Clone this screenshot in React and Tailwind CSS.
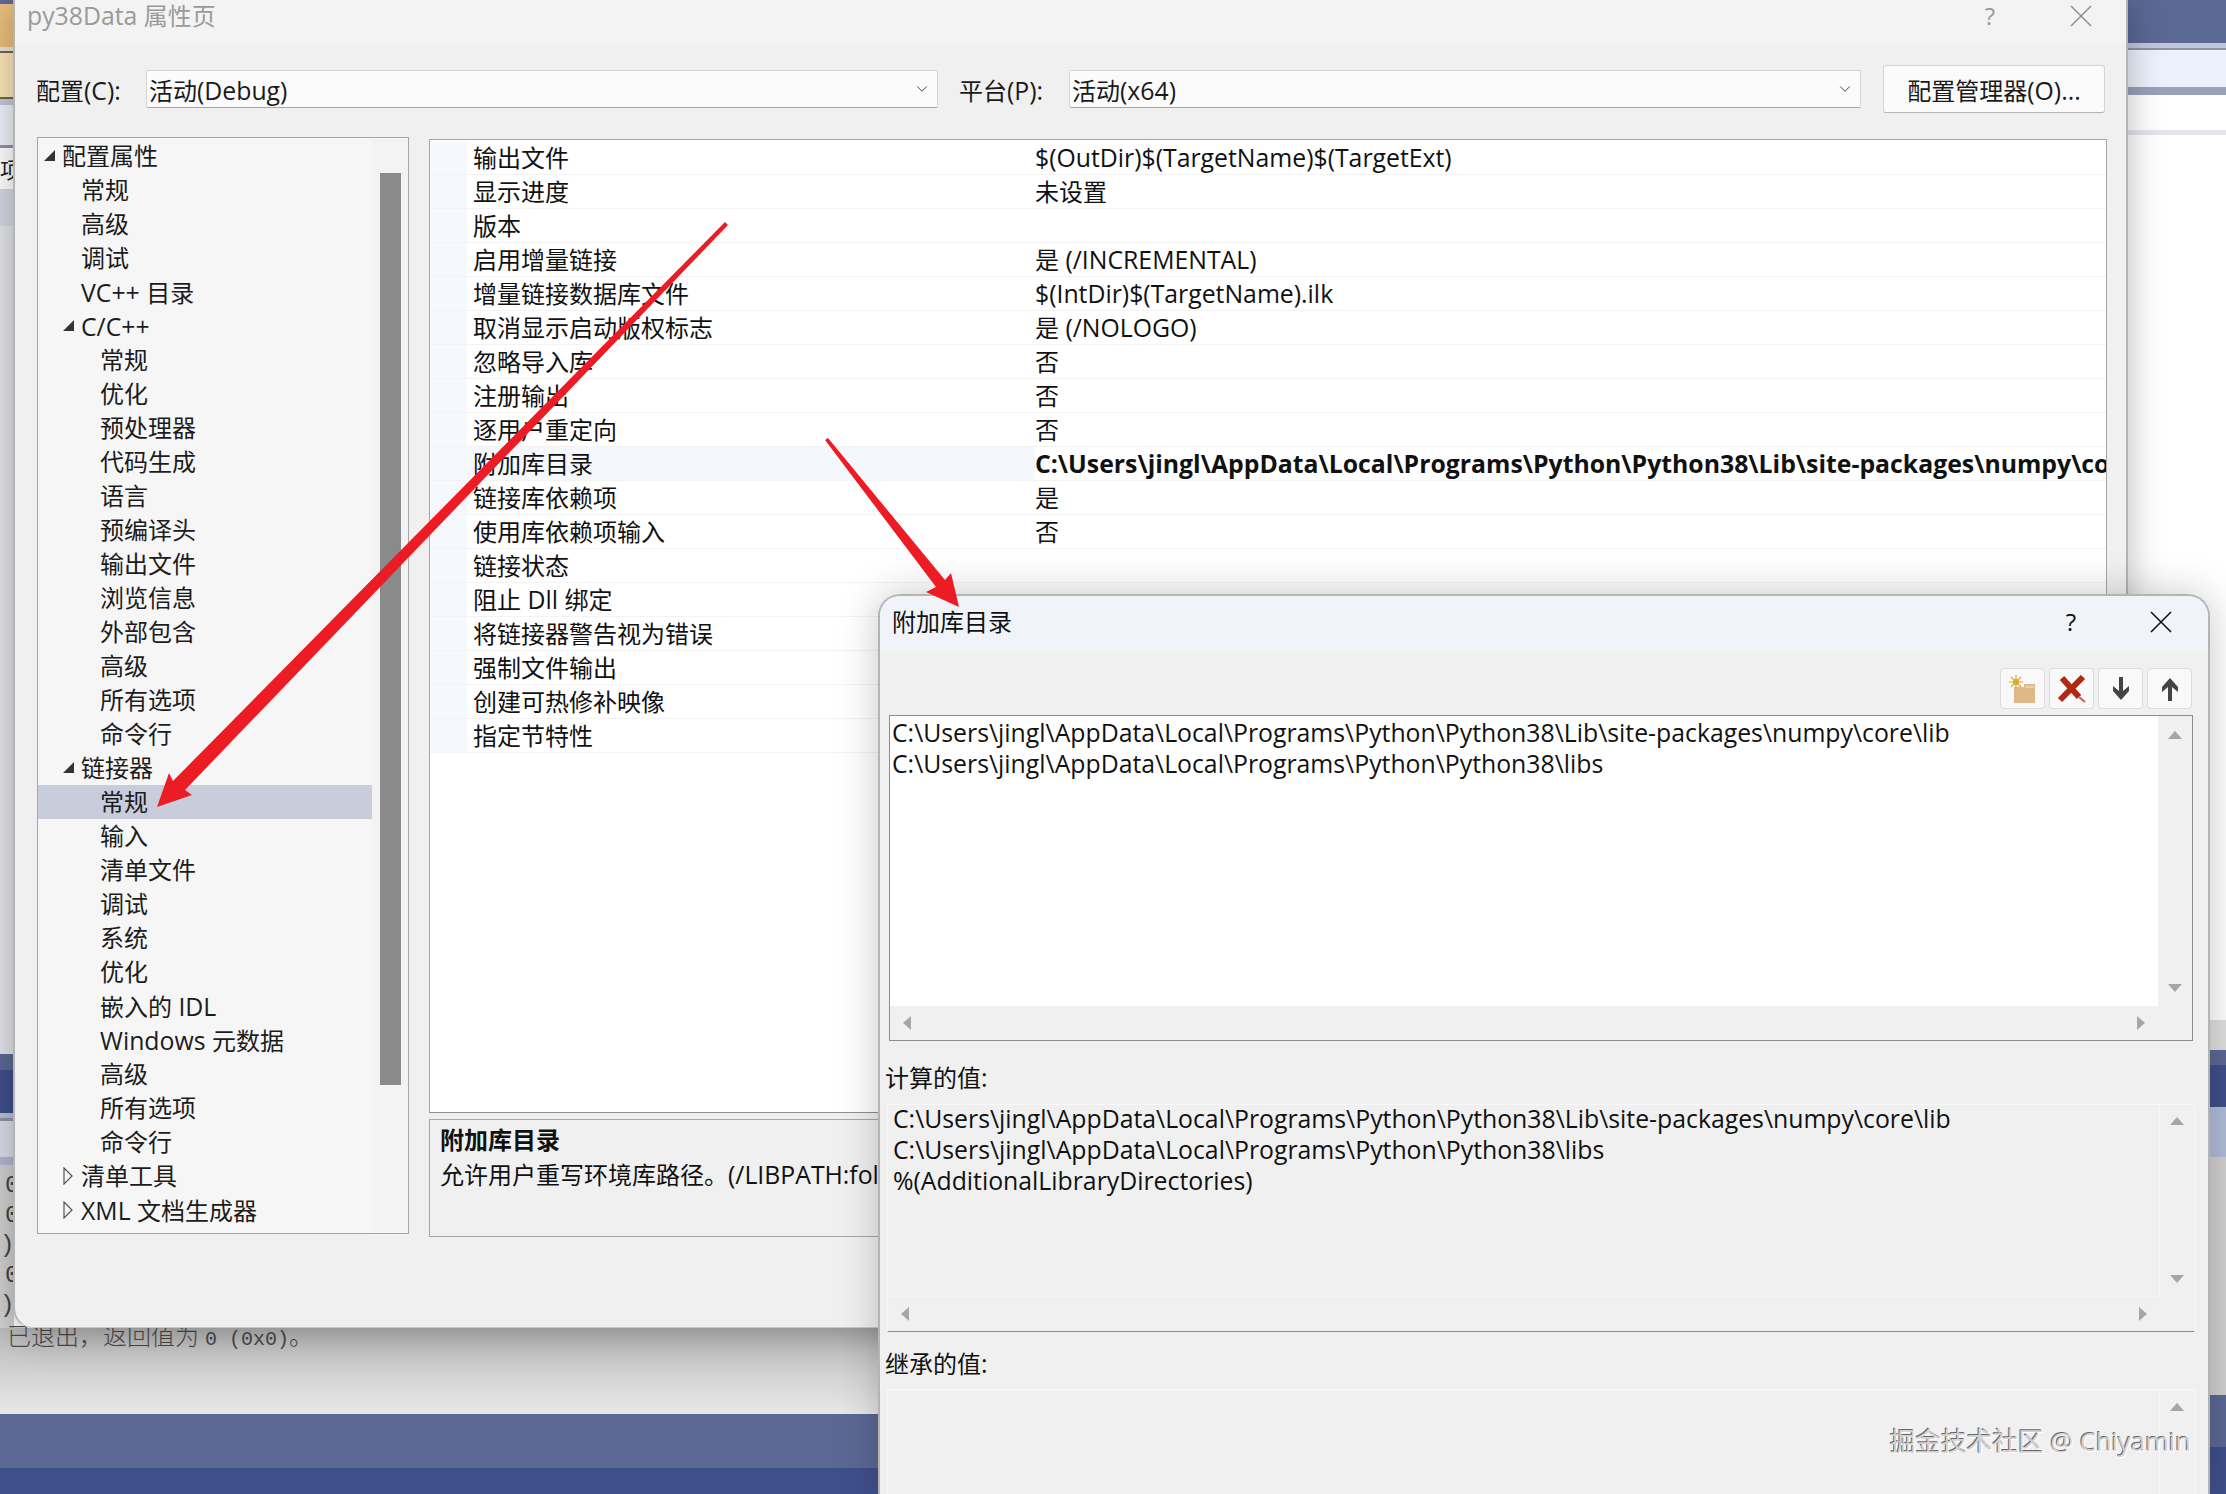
import { ChevronDown } from "lucide-react";

const uiFont = "[font-family:'Open_Sans','Noto_Sans_CJK_SC',sans-serif]";

// latin runs come out a bit narrow at the CJK size, so they get their own size
const Txt = ({ children }) =>
  children.split(/([\x00-\u024f]+)/).map((part, i) =>
    i % 2 ? (
      <span key={i} className="text-[24.8px]">
        {part}
      </span>
    ) : (
      part
    )
  );

const treeRows = [
  { label: "配置属性", level: 0, arrow: "open" },
  { label: "常规", level: 1 },
  { label: "高级", level: 1 },
  { label: "调试", level: 1 },
  { label: "VC++ 目录", level: 1 },
  { label: "C/C++", level: 1, arrow: "open" },
  { label: "常规", level: 2 },
  { label: "优化", level: 2 },
  { label: "预处理器", level: 2 },
  { label: "代码生成", level: 2 },
  { label: "语言", level: 2 },
  { label: "预编译头", level: 2 },
  { label: "输出文件", level: 2 },
  { label: "浏览信息", level: 2 },
  { label: "外部包含", level: 2 },
  { label: "高级", level: 2 },
  { label: "所有选项", level: 2 },
  { label: "命令行", level: 2 },
  { label: "链接器", level: 1, arrow: "open" },
  { label: "常规", level: 2, selected: true },
  { label: "输入", level: 2 },
  { label: "清单文件", level: 2 },
  { label: "调试", level: 2 },
  { label: "系统", level: 2 },
  { label: "优化", level: 2 },
  { label: "嵌入的 IDL", level: 2 },
  { label: "Windows 元数据", level: 2 },
  { label: "高级", level: 2 },
  { label: "所有选项", level: 2 },
  { label: "命令行", level: 2 },
  { label: "清单工具", level: 1, arrow: "closed" },
  { label: "XML 文档生成器", level: 1, arrow: "closed" },
];

const propRows = [
  ["输出文件", "$(OutDir)$(TargetName)$(TargetExt)"],
  ["显示进度", "未设置"],
  ["版本", ""],
  ["启用增量链接", "是 (/INCREMENTAL)"],
  ["增量链接数据库文件", "$(IntDir)$(TargetName).ilk"],
  ["取消显示启动版权标志", "是 (/NOLOGO)"],
  ["忽略导入库", "否"],
  ["注册输出", "否"],
  ["逐用户重定向", "否"],
  ["附加库目录", "C:\\Users\\jingl\\AppData\\Local\\Programs\\Python\\Python38\\Lib\\site-packages\\numpy\\core\\lib", true],
  ["链接库依赖项", "是"],
  ["使用库依赖项输入", "否"],
  ["链接状态", ""],
  ["阻止 Dll 绑定", ""],
  ["将链接器警告视为错误", ""],
  ["强制文件输出", ""],
  ["创建可热修补映像", ""],
  ["指定节特性", ""],
];

const levelPadding = ["pl-[24px]", "pl-[43px]", "pl-[62px]"];
const arrowLeft = ["left-[4px]", "left-[23px]"];

const TreeArrow = ({ type, level }) => (
  <svg width="14" height="18" viewBox="0 0 14 18" className={`absolute top-[8px] ${arrowLeft[level]}`}>
    {type === "open" ? (
      <polygon points="13,3 13,14 2,14" fill="#333" />
    ) : (
      <polygon points="3,1 11,9 3,17" fill="none" stroke="#555" strokeWidth="1.2" />
    )}
  </svg>
);

const Select = ({ value, width }) => (
  <div className={`${width} h-[38px] flex items-center justify-between pl-[2px] pr-[6px] bg-[#fbfbfb] border border-[#d4d4d4] border-b-[#a8a8a8] rounded-[2px]`}>
    <span className="text-[24px] text-[#1a1a1a] pt-[4px]">
      <Txt>{value}</Txt>
    </span>
    <ChevronDown size={18} strokeWidth={1.3} className="text-[#444]" />
  </div>
);

const ScrollArrow = ({ dir }) => {
  const pts = {
    up: "1,11 8,3 15,11",
    down: "1,4 15,4 8,12",
    left: "11,1 11,15 3,8",
    right: "4,1 12,8 4,15",
  };
  return (
    <svg width="16" height="16" viewBox="0 0 16 16" className="shrink-0">
      <polygon points={pts[dir]} fill="#a6a6a6" />
    </svg>
  );
};

const PathBox = ({ lines, height, outerClass, innerClass, pad, arrowPad, hideBar }) => (
  <div className={`${height} ${outerClass} flex flex-col`}>
    <div className="flex-1 flex min-h-0">
      <div className={`flex-1 ${innerClass} ${pad} text-[24px] leading-[31px] text-[#111] whitespace-nowrap overflow-hidden`}>
        <div className="-mt-[2px]">
          {lines.map((line) => (
            <div key={line}>
              <Txt>{line}</Txt>
            </div>
          ))}
        </div>
      </div>
      <div className={`w-[34px] flex flex-col items-center justify-between ${arrowPad}`}>
        <ScrollArrow dir="up" />
        <ScrollArrow dir="down" />
      </div>
    </div>
    {!hideBar && (
      <div className="h-[34px] shrink-0 flex items-center justify-between pl-[10px] pr-[43px]">
        <ScrollArrow dir="left" />
        <ScrollArrow dir="right" />
      </div>
    )}
  </div>
);

const ToolButton = ({ children }) => (
  <div className="w-[45px] h-[41px] flex items-center justify-center bg-[#f9f9f9] border border-[#dcdcdc] rounded-[4px]">
    {children}
  </div>
);

const Band = ({ className }) => <div className={`shrink-0 ${className}`} />;

const Backdrop = () => (
  <div className="flex h-full">
    {/* left sliver of the IDE */}
    <div className="w-[14px] flex flex-col font-['Noto_Sans_CJK_SC']">
      <Band className="h-[4px] bg-[#5c6894]" />
      <Band className="h-[43px] bg-[#e8bf7c]" />
      <Band className="h-[4px] bg-[#e9e4da]" />
      <Band className="h-[48px] bg-[#fbe5b8] border-y-2 border-[#75643f]" />
      <Band className="h-[6px] bg-[#c2c8d8]" />
      <Band className="h-[40px] bg-[#eef2fa]" />
      <Band className="h-[3px] bg-[#8f93a5]" />
      <div className="h-[41px] shrink-0 bg-white text-[22px] leading-[41px] text-[#222] overflow-hidden">项</div>
      <Band className="h-[37px] bg-[#d6d8e2]" />
      <Band className="h-[828px] bg-[#e4e5ea]" />
      <Band className="h-[16px] bg-[#5c6894]" />
      <Band className="h-[43px] bg-[#3f4f8a]" />
      <Band className="h-[5px] bg-[#b8c0d8]" />
      <Band className="h-[3px] bg-[#8f93a5]" />
      <Band className="h-[36px] bg-[#dadde8]" />
      <Band className="h-[8px] bg-[#b5b5d5]" />
      <div className="h-[163px] shrink-0 bg-[#cfcfcf] text-[24px] leading-[30px] text-[#444] font-['Liberation_Mono'] pt-[6px] overflow-hidden">
        <div className="pl-[5px]">0</div>
        <div className="pl-[5px]">0</div>
        <div>)</div>
        <div className="pl-[5px]">0</div>
        <div>)</div>
      </div>
      <Band className="h-[86px] bg-gradient-to-b from-[#b9b9b9] to-[#e8e8ea]" />
      <Band className="h-[54px] bg-[#5c6894]" />
      <Band className="h-[26px] bg-[#3f4f8a]" />
    </div>

    <div className="w-[2114px] flex flex-col">
      <Band className="h-[1328px]" />
      <div className="h-[86px] shrink-0 bg-gradient-to-b from-[#b9b9b9] to-[#e8e8ea] text-[24px] leading-[19px] text-[#4a4a4a] font-['Liberation_Serif','Noto_Sans_CJK_SC',serif] font-light whitespace-nowrap">
        <span className="relative -ml-[7px]">
          已退出，返回值为 <span className="font-['Liberation_Mono'] text-[20px]">0 (0x0)</span>。
        </span>
      </div>
      <Band className="h-[54px] bg-[#5c6894]" />
      <Band className="h-[26px] bg-[#3f4f8a]" />
    </div>

    {/* right sliver of the IDE */}
    <div className="w-[98px] flex flex-col">
      <Band className="h-[43px] bg-[#5c6894]" />
      <Band className="h-[5px] bg-[#c0c8e0]" />
      <Band className="h-[2px] bg-[#8f93a5]" />
      <Band className="h-[37px] bg-[#ecf1fb]" />
      <Band className="h-[8px] bg-[#9aa2ba]" />
      <Band className="h-[35px] bg-white" />
      <Band className="h-[5px] bg-[#e4e4ec]" />
      <Band className="h-[885px] bg-white" />
      <Band className="h-[30px] bg-[#dfdfdf]" />
      <Band className="h-[15px] bg-[#5c6894]" />
      <Band className="h-[42px] bg-[#3f4f8a]" />
      <Band className="h-[50px] bg-[#b0bbd8]" />
      <Band className="h-[238px] bg-[#d0d0d0]" />
      <Band className="h-[52px] bg-[#5c6894]" />
      <Band className="h-[47px] bg-[#3f4f8a]" />
    </div>
  </div>
);

const TreePanel = () => (
  <div className="w-[372px] h-[1097px] ml-[22px] flex bg-[#f6f6f6] border border-[#a6a6a6] pt-[1px]">
    <div className="w-[334px] shrink-0">
      {treeRows.map((row, i) => (
        <div
          key={i}
          className={`relative h-[34px] leading-[34px] text-[24px] text-[#1c1c1c] whitespace-nowrap ${levelPadding[row.level]} ${row.selected ? "bg-[#c9ccda]" : ""}`}
        >
          {row.arrow && <TreeArrow type={row.arrow} level={row.level} />}
          <Txt>{row.label}</Txt>
        </div>
      ))}
    </div>
    <div className="flex-1 pl-[8px] pr-[7px] pt-[34px] bg-[#f3f3f3]">
      <div className="h-[912px] bg-[#8a8a8a]" />
    </div>
  </div>
);

const PropGrid = () => (
  <div className="h-[974px] bg-white border border-[#a6a6a6] border-b-[#8f8f8f] pt-[1px] overflow-hidden">
    {propRows.map(([name, value, bold]) => (
      <div key={name} className={`flex h-[34px] leading-[33px] text-[24px] text-[#111] border-b border-[#f3f3f3] ${bold ? "bg-[#f4f7fc]" : ""}`}>
        <div className="w-[37px] shrink-0 bg-[#f5f8fd]" />
        <div className="w-[568px] shrink-0 pl-[6px] whitespace-nowrap">
          <Txt>{name}</Txt>
        </div>
        <div className={`flex-1 min-w-0 whitespace-nowrap overflow-hidden bg-white ${bold ? "font-bold" : ""}`}>
          <Txt>{value}</Txt>
        </div>
      </div>
    ))}
  </div>
);

const MainDialog = () => (
  <div className="absolute left-[13px] top-0 w-[2115px] h-[1328px] bg-[#f0f0f0] border-x-2 border-[#b4b4b4] border-b border-b-[#c8c8c8] rounded-bl-[20px] shadow-[0_6px_36px_rgba(0,0,0,0.28)]">
    <div className="h-[44px] bg-[#f3f3f3] flex items-center justify-between pl-[12px] pr-[34px] pb-[13px] text-[24px] text-[#9a9a9a]">
      <span>
        <Txt>py38Data 属性页</Txt>
      </span>
      <div className="flex items-center gap-[75px]">
        <span>?</span>
        <svg width="22" height="22" viewBox="0 0 22 22" stroke="#8d8d8d" strokeWidth="1.5">
          <line x1="1" y1="1" x2="21" y2="21" />
          <line x1="21" y1="1" x2="1" y2="21" />
        </svg>
      </div>
    </div>

    <div className="h-[48px] mt-[21px] flex items-center pl-[21px] text-[24px] text-[#1a1a1a]">
      <span className="w-[110px] shrink-0 pt-[3px]">
        <Txt>配置(C):</Txt>
      </span>
      <Select value="活动(Debug)" width="w-[792px]" />
      <span className="w-[110px] shrink-0 ml-[21px] pt-[3px]">
        <Txt>平台(P):</Txt>
      </span>
      <Select value="活动(x64)" width="w-[792px]" />
      <div className="ml-[22px] w-[222px] h-[48px] pt-[3px] flex items-center justify-center bg-[#fbfbfb] border border-[#d4d4d4] border-b-[#b4b4b4] rounded-[3px]">
        <span>
          <Txt>配置管理器(O)...</Txt>
        </span>
      </div>
    </div>

    <div className="flex mt-[24px] gap-[20px]">
      <TreePanel />
      <div className="w-[1678px] pt-[2px]">
        <PropGrid />
        <div className="h-[118px] mt-[6px] px-[10px] pt-[3px] border border-[#a6a6a6] text-[24px] leading-[34px] text-[#111] whitespace-nowrap overflow-hidden">
          <div className="font-bold">附加库目录</div>
          <div>
            <Txt>允许用户重写环境库路径。(/LIBPATH:folder)</Txt>
          </div>
        </div>
      </div>
    </div>
  </div>
);

const pathA = "C:\\Users\\jingl\\AppData\\Local\\Programs\\Python\\Python38\\Lib\\site-packages\\numpy\\core\\lib";
const pathB = "C:\\Users\\jingl\\AppData\\Local\\Programs\\Python\\Python38\\libs";

const LibraryDialog = () => (
  <div className="absolute left-[878px] top-[594px] w-[1332px] h-[900px] bg-[#f0f0f0] border-x-2 border-t-2 border-[#b4b4b4] rounded-t-[22px] shadow-[0_0_40px_rgba(0,0,0,0.22)] overflow-hidden">
    <div className="h-[56px] bg-[#f0f4f9] flex items-center justify-between pl-[12px] pr-[36px] pb-[5px] text-[24px] text-[#111]">
      <span>附加库目录</span>
      <div className="flex items-center gap-[74px]">
        <span>?</span>
        <svg width="22" height="22" viewBox="0 0 22 22" stroke="#111" strokeWidth="1.6">
          <line x1="1" y1="1" x2="21" y2="21" />
          <line x1="21" y1="1" x2="1" y2="21" />
        </svg>
      </div>
    </div>

    <div className="flex justify-end gap-[4px] mt-[16px] pr-[16px]">
      <ToolButton>
        <svg width="28" height="28" viewBox="0 0 28 28">
          <path d="M5 12h21v16H5z" fill="#deb887" />
          <path d="M15 9h11v3H15z" fill="#deb887" />
          <path d="M16 12h9" stroke="#f6ead6" strokeWidth="1.2" />
          <circle cx="7" cy="7" r="3" fill="#d79b1e" />
          <path d="M7 0v14M0 7h14M2 2l10 10M12 2L2 12" stroke="#e0a82e" strokeWidth="1.2" />
        </svg>
      </ToolButton>
      <ToolButton>
        <svg width="30" height="28" viewBox="0 0 30 28">
          <line x1="3" y1="25" x2="26" y2="2" stroke="#b02a12" strokeWidth="6" />
          <line x1="5" y1="3" x2="22" y2="22" stroke="#b02a12" strokeWidth="6" />
          <line x1="22" y1="22" x2="28" y2="27" stroke="#c8604e" strokeWidth="2" />
        </svg>
      </ToolButton>
      <ToolButton>
        <svg width="20" height="26" viewBox="0 0 20 26">
          <path d="M8 1h4v14l6-5v5l-8 9-8-9v-5l6 5z" fill="#444" />
        </svg>
      </ToolButton>
      <ToolButton>
        <svg width="20" height="26" viewBox="0 0 20 26">
          <path d="M8 25h4V11l6 5v-5L10 2 2 11v5l6-5z" fill="#444" />
        </svg>
      </ToolButton>
    </div>

    <div className="pl-[9px] pr-[15px] mt-[6px]">
      <PathBox
        lines={[pathA, pathB]}
        height="h-[326px]"
        outerClass="border border-[#8c8c8c]"
        innerClass="bg-white"
        pad="pl-[2px] pt-[3px]"
        arrowPad="pt-[12px] pb-[10px]"
      />
    </div>

    <div className="pl-[5px] mt-[21px] text-[24px] leading-[30px] text-[#111]">
      <Txt>计算的值:</Txt>
    </div>
    <div className="pl-[7px] pr-[13px] mt-[11px]">
      <PathBox
        lines={[pathA, pathB, "%(AdditionalLibraryDirectories)"]}
        height="h-[228px]"
        outerClass="border border-[#f8f8f8] border-b-[#8c8c8c]"
        innerClass="border-r border-b border-[#f6f6f6]"
        pad="pl-[5px] pt-[0px]"
        arrowPad="pt-[9px] pb-[10px]"
      />
    </div>

    <div className="pl-[5px] mt-[16px] text-[24px] leading-[30px] text-[#111]">
      <Txt>继承的值:</Txt>
    </div>
    <div className="pl-[7px] pr-[13px] mt-[10px]">
      <PathBox
        lines={[]}
        height="h-[160px]"
        outerClass="border border-[#f8f8f8]"
        innerClass="border-r border-[#f6f6f6]"
        pad=""
        arrowPad="pt-[10px] pb-[10px]"
        hideBar
      />
    </div>
  </div>
);

export default function App() {
  return (
    <div className={`relative w-[2226px] h-[1494px] overflow-hidden bg-white ${uiFont}`}>
      <Backdrop />
      <MainDialog />
      <LibraryDialog />

      {/* annotation arrows */}
      <svg width="2226" height="1494" className="absolute inset-0 pointer-events-none">
        <polygon points="725,222 728,225 185,790 192,795 157,807 169,773 173,781" fill="#ed1c24" />
        <polygon points="828,438 825,440 936,587 926,592 959,607 951,573 945,580" fill="#ed1c24" />
      </svg>

      <div className="absolute left-[1890px] top-[1425px] text-[25.6px] leading-[34px] text-[#d2d2d2] [text-shadow:-1px_-1px_0_#6a6a6a,1px_1px_0_#ffffff] whitespace-nowrap">
        掘金技术社区 @ Chiyamin
      </div>
    </div>
  );
}
